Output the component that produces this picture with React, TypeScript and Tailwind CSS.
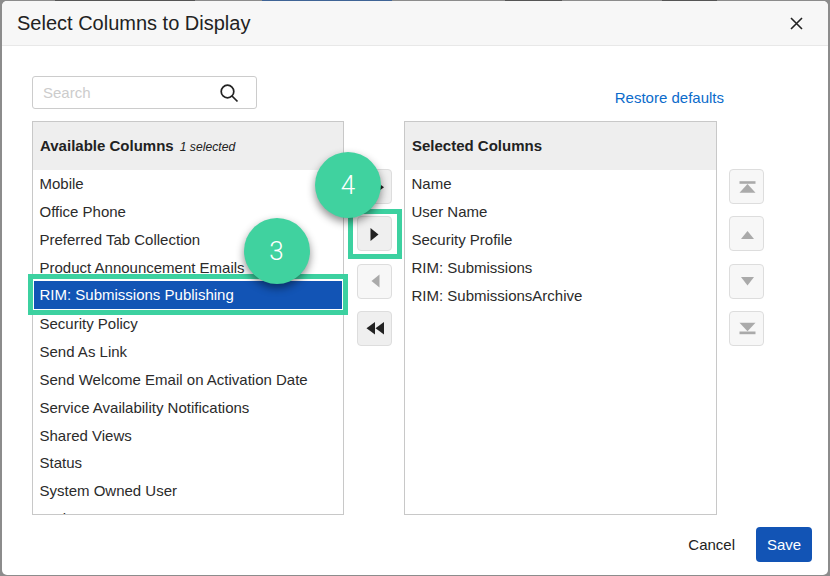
const available = [
  "Mobile",
  "Office Phone",
  "Preferred Tab Collection",
  "Product Announcement Emails",
  "RIM: Submissions Publishing",
  "Security Policy",
  "Send As Link",
  "Send Welcome Email on Activation Date",
  "Service Availability Notifications",
  "Shared Views",
  "Status",
  "System Owned User",
  "Tasks",
];

const selected = ["Name", "User Name", "Security Profile", "RIM: Submissions", "RIM: SubmissionsArchive"];

const Icon = ({points, muted}: {points: string[]; muted?: boolean}) => (
  <svg width="20" height="20" viewBox="0 0 20 20" fill={muted ? "#aaaaaa" : "#222222"}>
    {points.map((p) => (
      <polygon key={p} points={p} />
    ))}
  </svg>
);

const MoveButton = ({points, muted}: {points: string[]; muted?: boolean}) => (
  <div
    className={`flex h-[35px] w-[35px] items-center justify-center rounded-[4px] border border-[#dddddd] ${
      muted ? "bg-[#f7f7f7]" : "bg-[#efefef]"
    }`}
  >
    <Icon points={points} muted={muted} />
  </div>
);

const ListPanel = ({title, note, items, width}: {title: string; note?: string; items: string[]; width: string}) => (
  <div className={`h-[394px] shrink-0 overflow-hidden border border-[#c8c8c8] ${width}`}>
    <div className="flex h-[48px] items-center gap-[6px] bg-[#eeeeee] pl-[7px] pt-[1px]">
      <span className="text-[15px] font-bold text-[#222222]">{title}</span>
      {note && <span className="pt-[1px] text-[12.2px] italic text-[#222222]">{note}</span>}
    </div>
    <div className="pt-[0.3px]">
      {items.map((item) => (
        <div
          key={item}
          className={`flex h-[27.9px] items-center pt-[1px] text-[15px] ${
            item === "RIM: Submissions Publishing"
              ? "mx-[1px] mb-[0.9px] mt-[-0.9px] bg-[#1254b5] pl-[5.5px] text-white"
              : "pl-[6.5px] text-[#2b2b2b]"
          }`}
        >
          {item}
        </div>
      ))}
    </div>
  </div>
);

const Badge = ({label, className}: {label: string; className: string}) => (
  <div
    className={`absolute flex h-[66px] w-[66px] items-center justify-center rounded-full bg-[#40d29f] font-['Roboto',sans-serif] text-[26px] font-light text-white shadow-[0_4px_8px_rgba(0,0,0,0.45)] ${className}`}
  >
    {label}
  </div>
);

export default function App() {
  return (
    <div className="relative h-[576px] w-[830px] overflow-hidden bg-[#8c8c8c] px-[2px] font-['Liberation_Sans',Arial,sans-serif]">
      <div className="flex h-[1px] items-start">
        <div className="ml-[53px] h-[1px] w-[140px] bg-[#555555]" />
        <div className="ml-[67px] h-[1px] w-[130px] bg-[#3f6496]" />
        <div className="ml-[113px] h-[1px] w-[57px] bg-[#555555]" />
        <div className="ml-[100px] h-[1px] w-[55px] bg-[#555555]" />
      </div>
      <div className="flex h-[574px] w-[826px] flex-col rounded-[5px] bg-white">
        <div className="flex h-[45px] shrink-0 items-center justify-between rounded-t-[5px] border-b border-[#e8e8e8] bg-[#f7f7f7] pl-[15px] pr-[25px]">
          <span className="text-[20px] text-[#222222]">Select Columns to Display</span>
          <svg width="13" height="13" viewBox="0 0 13 13" stroke="#222222" strokeWidth="1.6">
            <path d="M1 1 L12 12 M12 1 L1 12" />
          </svg>
        </div>

        <div className="flex flex-col px-[30px] pt-[30px]">
          <div className="flex h-[33px] w-[692px] items-start justify-between">
            <div className="flex h-[33px] w-[225px] items-center justify-between rounded-[3px] border border-[#cccccc] pl-[10px] pr-[17px]">
              <span className="pt-[1px] text-[15px] text-[#cccccc]">Search</span>
              <svg width="20" height="20" viewBox="0 0 20 20" fill="none" stroke="#222222" strokeWidth="1.7">
                <circle cx="8.5" cy="8.5" r="6.3" />
                <path d="M13 13 L18.5 18.5" />
              </svg>
            </div>
            <a className="mt-[11px] text-[15px] text-[#0b6bcb]">Restore defaults</a>
          </div>

          <div className="mt-[12px] flex items-start">
            <ListPanel title="Available Columns" note="1 selected" items={available} width="w-[312px]" />
            <div className="flex w-[60px] shrink-0 flex-col gap-[12.33px] pl-[13px] pt-[48px]">
              <MoveButton points={["2,4 10,10.3 2,16.5", "10.5,4 19,10.3 10.5,16.5"]} />
              <MoveButton points={["5.5,4 13.5,10.5 5.5,17"]} />
              <MoveButton muted points={["14.5,3.5 6.5,10 14.5,16.5"]} />
              <MoveButton points={["10,4 1.5,10.3 10,16.5", "19,4 10.5,10.3 19,16.5"]} />
            </div>
            <ListPanel title="Selected Columns" items={selected} width="w-[313px]" />
            <div className="flex shrink-0 flex-col gap-[12.33px] pl-[12px] pt-[48px]">
              <MoveButton muted points={["2.5,4.2 18.5,4.2 18.5,6.8 2.5,6.8", "10.5,7 18.5,15.7 2.5,15.7"]} />
              <MoveButton muted points={["10.5,7 17,15 4,15"]} />
              <MoveButton muted points={["4,6 17,6 10.5,14.5"]} />
              <MoveButton muted points={["2.5,4.8 18.5,4.8 10.5,13.2", "2.5,13.5 18.5,13.5 18.5,16.2 2.5,16.2"]} />
            </div>
          </div>
        </div>

        <div className="mt-[12px] flex items-center justify-end gap-[21px] pr-[16px]">
          <span className="pt-[1px] text-[15px] text-[#222222]">Cancel</span>
          <button className="h-[35px] w-[56px] rounded-[4px] bg-[#1254b5] pt-[1px] text-[15px] text-white">Save</button>
        </div>
      </div>

      <div className="absolute left-[28px] top-[274px] h-[41px] w-[320px] border-[5px] border-[#3cd1a0]" />
      <div className="absolute left-[348px] top-[209px] h-[50px] w-[54px] border-[5px] border-[#3cd1a0]" />
      <Badge label="3" className="left-[243.5px] top-[218px]" />
      <Badge label="4" className="left-[315px] top-[152px]" />
    </div>
  );
}
